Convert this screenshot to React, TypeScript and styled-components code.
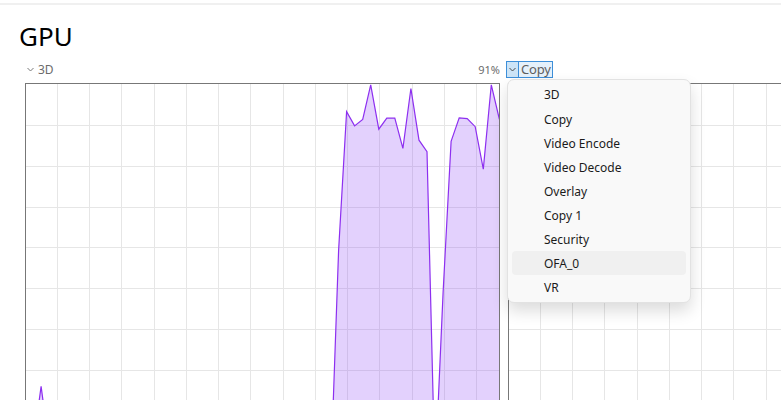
import React from 'react';
import styled, { createGlobalStyle } from 'styled-components';

const GlobalStyle = createGlobalStyle`
	html,
	body {
		margin: 0;
		padding: 0;
		background: #ffffff;
	}

	body {
		font-family: 'Noto Sans', 'Open Sans', 'Noto Sans CJK SC', sans-serif;
		color: #1b1b1b;
	}
`;

const CHART_W = 473;
const CHART_H = 406;
const STEP_X = 8.04;
const GRID_X = 32.25;
const GRID_Y = 40.8;

// 60 samples, one per second, in percent
const engine3d = [
	2.7, 11, 25.7, 11, 3.5, 2.4, 4.1, 3.2, 2.6, 3.9, 2.2, 3.4, 4.6, 2.8, 3.1, 2.5, 3.7, 2.9, 4.2, 3.3,
	2.6, 3.8, 2.4, 3, 4.4, 2.7, 3.6, 2.3, 3.1, 4, 2.8, 3.4, 2.5, 3.9, 3.2, 2.6, 3.5, 2.9, 2.9, 59.1,
	93.2, 89.7, 91.3, 99.8, 88.9, 91.6, 91.6, 84.2, 98.9, 86.2, 83.4, 3.9, 48.8, 85.9, 91.7, 91.5, 89.5,
	79.1, 99.8, 91.3,
];

const engineCopy: number[] = new Array(60).fill(0);

const engines = ['3D', 'Copy', 'Video Encode', 'Video Decode', 'Overlay', 'Copy 1', 'Security', 'OFA_0', 'VR'];

const Page = styled.div`
	width: 781px;
	height: 400px;
	overflow: hidden;
	padding-top: 3px;
	box-sizing: border-box;
`;

const TopRule = styled.div`
	height: 2px;
	background: #f0f0f0;
`;

const Title = styled.h1`
	margin: 13px 0 0 19px;
	font-size: 26px;
	line-height: 36px;
	font-weight: 400;
	color: #000000;
`;

const ChartGrid = styled.div`
	display: grid;
	grid-template-columns: 475px 475px;
	column-gap: 8px;
	margin: 7px 0 0 25px;
`;

const Panel = styled.div`
	display: flex;
	flex-direction: column;
`;

const LabelRow = styled.div`
	position: relative;
	display: flex;
	align-items: center;
	justify-content: space-between;
	height: 17px;
	margin-bottom: 5px;
`;

const EngineLabel = styled.div`
	display: flex;
	align-items: center;
	gap: 4px;
	padding-left: 2px;
	font-size: 12px;
	line-height: 16px;
	color: #6b6b6b;
`;

const Percent = styled.div`
	font-size: 11px;
	line-height: 15px;
	color: #6b6b6b;
`;

const EngineSelect = styled.div`
	display: flex;
	align-items: stretch;
	height: 17px;
	margin-left: -2px;
	border: 1px solid #3d8fd9;
	box-sizing: border-box;
`;

const SelectArrow = styled.div`
	display: flex;
	align-items: center;
	justify-content: center;
	width: 11px;
	background: #cce4f7;
	border-right: 1px solid #3d8fd9;
`;

const SelectText = styled.div`
	display: flex;
	align-items: center;
	padding: 0 1px 0 2px;
	background: #e5f1fb;
	font-size: 13px;
	line-height: 15px;
	color: #5e5e5e;
	letter-spacing: -0.2px;
`;

const ChartBox = styled.div`
	width: 475px;
	height: 408px;
	border: 1px solid #777777;
	box-sizing: border-box;
	overflow: hidden;

	svg {
		display: block;
	}
`;

const Menu = styled.div`
	position: absolute;
	left: -1px;
	top: 18px;
	width: 184px;
	padding: 2px 0 3px;
	background: #f9f9f9;
	border: 1px solid #e2e2e2;
	border-radius: 7px;
	box-sizing: border-box;
	box-shadow: 0 8px 16px rgba(0, 0, 0, 0.14);
	z-index: 2;
`;

const MenuItem = styled.div<{ $active?: boolean }>`
	display: flex;
	align-items: center;
	height: 24px;
	margin: 0 4px;
	padding-left: 32px;
	border-radius: 4px;
	font-size: 12px;
	color: #1b1b1b;
	background: ${p => (p.$active ? '#f0f0f0' : 'transparent')};

	&:first-child {
		height: 25px;
	}
`;

const Chevron = ({ color }: { color: string }) => (
	<svg
		width="7"
		height="5"
		viewBox="0 0 7 5"
	>
		<polyline
			points="0.5,1 3.5,4 6.5,1"
			fill="none"
			stroke={color}
			strokeWidth="1"
		/>
	</svg>
);

const UsageChart = ({ values }: { values: number[] }) => {
	const cols = [];
	for (let n = 1; n * GRID_X - 1 < CHART_W; n++) {
		cols.push(Math.floor(n * GRID_X - 1) + 0.5);
	}
	const rows = [];
	for (let m = 1; m * GRID_Y < CHART_H; m++) {
		rows.push(Math.floor(m * GRID_Y + 0.7) + 0.5);
	}

	const pts = values.map((v, k) => [k * STEP_X - 1, (1 - v / 100) * (CHART_H + 1)]);
	const line = pts.map(([x, y]) => `${x.toFixed(1)},${y.toFixed(1)}`).join(' ');
	const last = pts[pts.length - 1];
	const area = `M${pts[0][0]},${CHART_H + 2} L${line.split(' ').join(' L')} L${last[0]},${CHART_H + 2} Z`;

	return (
		<svg
			width={CHART_W}
			height={CHART_H}
		>
			{cols.map(x => (
				<line
					key={`c${x}`}
					x1={x}
					x2={x}
					y1={0}
					y2={CHART_H}
					stroke="#e6e6e6"
					strokeWidth="1"
				/>
			))}
			{rows.map(y => (
				<line
					key={`r${y}`}
					x1={0}
					x2={CHART_W}
					y1={y}
					y2={y}
					stroke="#e6e6e6"
					strokeWidth="1"
				/>
			))}
			<path
				d={area}
				fill="rgba(142, 72, 246, 0.25)"
			/>
			<polyline
				points={line}
				fill="none"
				stroke="#8d2ff0"
				strokeWidth="1.2"
				strokeLinejoin="miter"
			/>
		</svg>
	);
};

const App = () => {
	return (
		<>
			<GlobalStyle />
			<Page>
				<TopRule />
				<Title>GPU</Title>
				<ChartGrid>
					<Panel>
						<LabelRow>
							<EngineLabel>
								<Chevron color="#7a7a7a" />
								3D
							</EngineLabel>
							<Percent>91%</Percent>
						</LabelRow>
						<ChartBox>
							<UsageChart values={engine3d} />
						</ChartBox>
					</Panel>
					<Panel>
						<LabelRow>
							<EngineSelect>
								<SelectArrow>
									<Chevron color="#4a4a4a" />
								</SelectArrow>
								<SelectText>Copy</SelectText>
							</EngineSelect>
							<Menu>
								{engines.map(name => (
									<MenuItem
										key={name}
										$active={name === 'OFA_0'}
									>
										{name}
									</MenuItem>
								))}
							</Menu>
						</LabelRow>
						<ChartBox>
							<UsageChart values={engineCopy} />
						</ChartBox>
					</Panel>
				</ChartGrid>
			</Page>
		</>
	);
};

export default App;
